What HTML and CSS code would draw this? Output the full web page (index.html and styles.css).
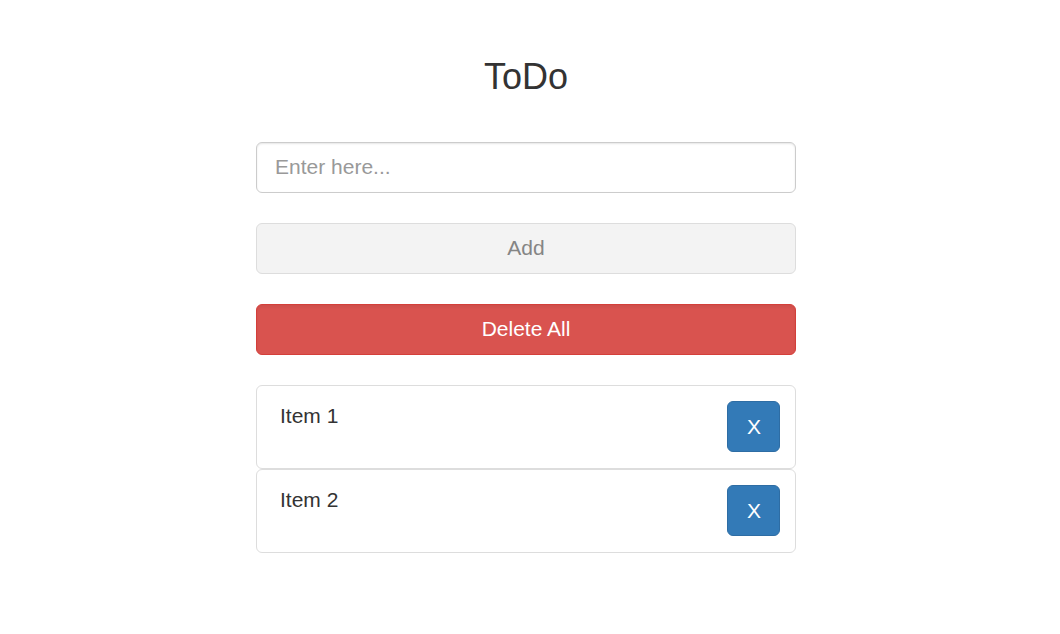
FILE: index.html
```
<!DOCTYPE html>
<html lang="en">
<head>
<meta charset="utf-8">
<title>ToDo</title>
<link rel="stylesheet" href="styles.css">
</head>
<body>
<main class="todo">
  <h1 class="title">ToDo</h1>
  <input class="field" type="text" placeholder="Enter here...">
  <button class="btn btn-add" disabled>Add</button>
  <button class="btn btn-danger">Delete All</button>
  <ul class="list">
    <li class="item"><span class="label">Item 1</span><button class="btn btn-remove">X</button></li>
    <li class="item"><span class="label">Item 2</span><button class="btn btn-remove">X</button></li>
  </ul>
</main>
</body>
</html>
```

FILE: styles.css
```
* {
  box-sizing: border-box;
}

body {
  margin: 0;
  background: #fff;
  color: #333;
  font-family: "Liberation Sans", Arial, sans-serif;
  font-size: 21px;
  line-height: 30px;
}

.todo {
  display: flex;
  flex-direction: column;
  gap: 30px;
  width: 540px;
  margin-left: 256px;
  padding-top: 57px;
}

.title {
  margin: 0 0 15px;
  font-size: 36px;
  font-weight: 400;
  line-height: 40px;
  text-align: center;
}

.field {
  width: 100%;
  height: 51px;
  padding: 8px 18px 10px;
  border: 1px solid #ccc;
  border-radius: 6px;
  box-shadow: inset 0 1px 2px rgba(0, 0, 0, 0.1);
  color: #555;
  font: inherit;
}

.field::placeholder {
  color: #999;
  opacity: 1;
}

.btn {
  height: 51px;
  padding: 8px 18px 10px;
  border: 1px solid;
  border-radius: 6px;
  font: inherit;
  line-height: 30px;
  text-align: center;
}

.btn-add {
  background: #f3f3f3;
  border-color: #ddd;
  color: #858585;
}

.btn-danger {
  background: #d9534f;
  border-color: #d43f3a;
  box-shadow: inset 0 2px 3px rgba(0, 0, 0, 0.06);
  color: #fff;
}

.list {
  margin: 0;
  padding: 0;
  list-style: none;
}

.item {
  display: flex;
  align-items: flex-start;
  justify-content: space-between;
  height: 84px;
  padding: 15px 15px 15px 23px;
  border: 1px solid #ddd;
  border-radius: 6px;
}

.btn-remove {
  width: 53px;
  padding: 9px 17px 9px 18px;
  background: #337ab7;
  border-color: #2e6da4;
  color: #fff;
}
```
